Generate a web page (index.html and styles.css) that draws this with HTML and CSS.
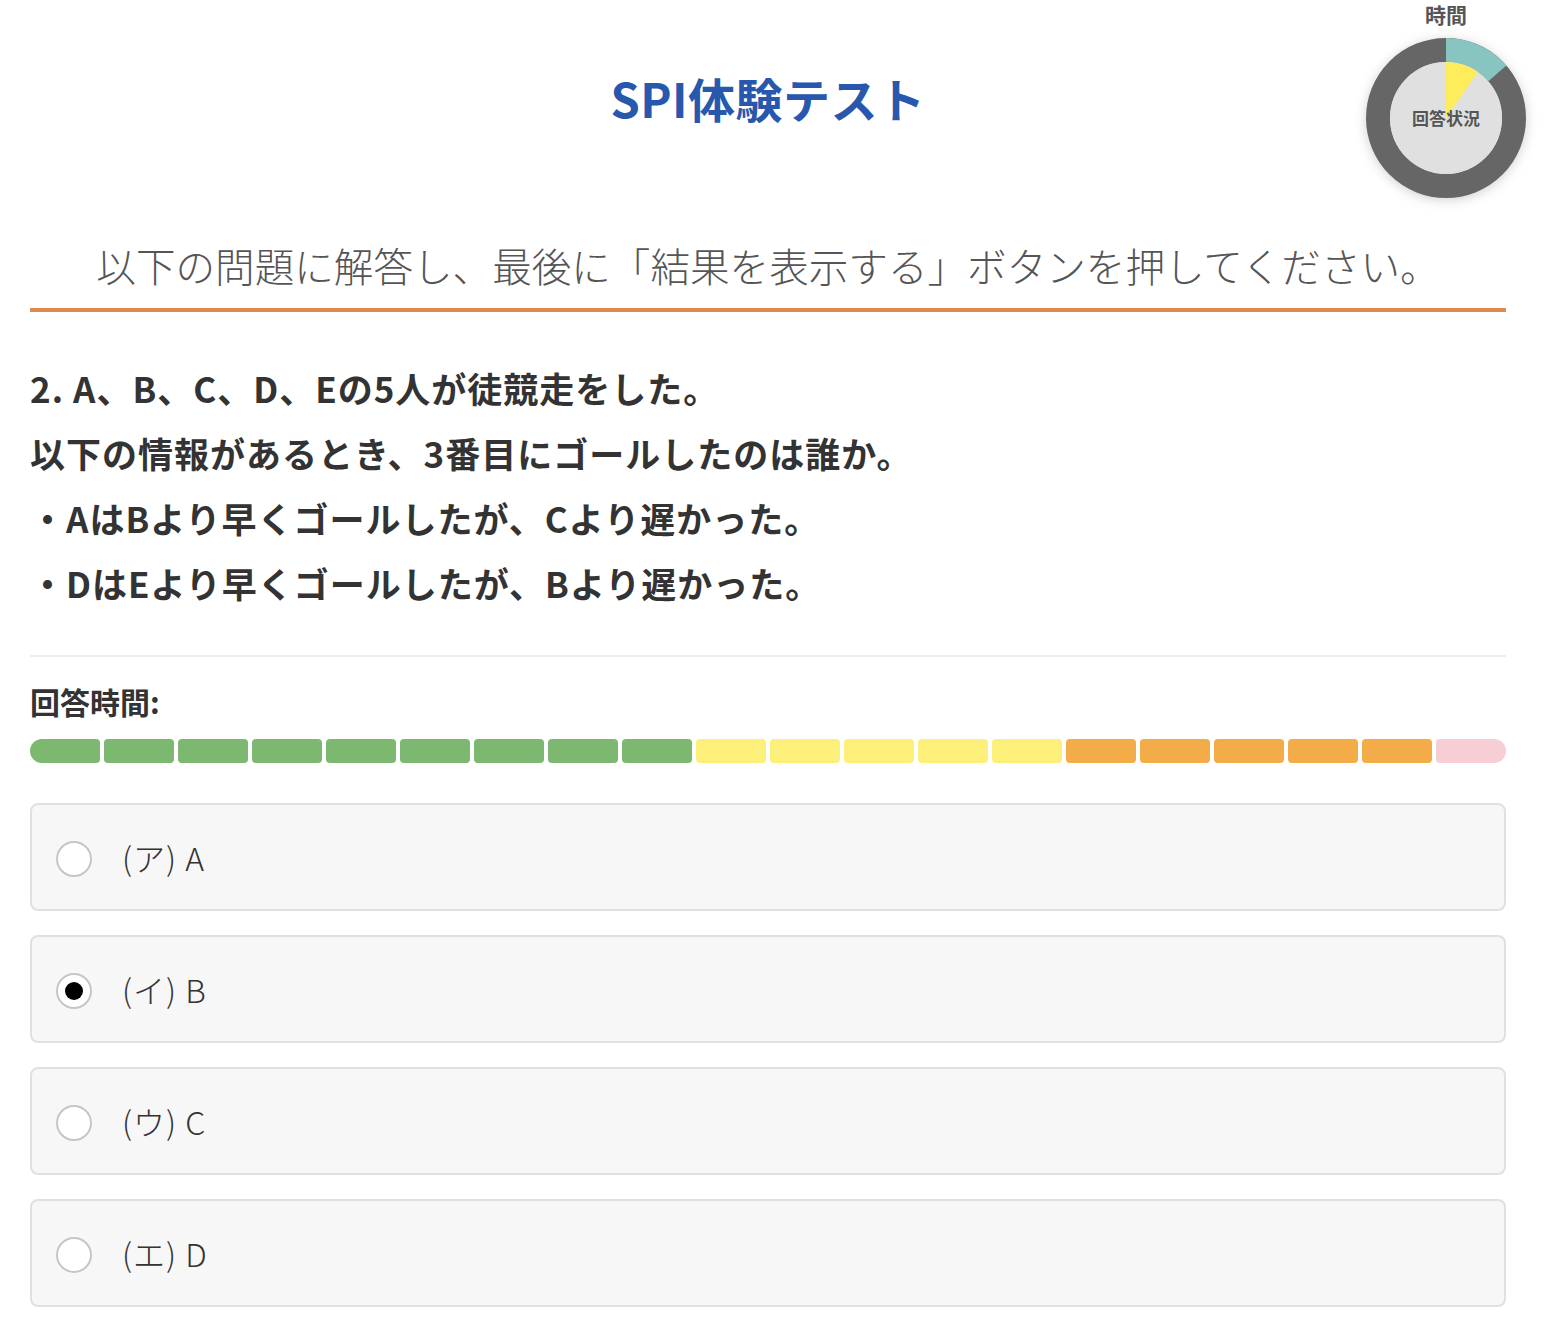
FILE: index.html
```html
<!DOCTYPE html>
<html lang="ja">
<head>
<meta charset="utf-8">
<title>SPI体験テスト</title>
<link rel="stylesheet" href="styles.css">
</head>
<body>
<div class="timer">
  <div class="timer-label">時間</div>
  <div class="donut">
    <svg width="200" height="200" viewBox="0 0 200 200">
      <circle cx="100" cy="100" r="68" fill="none" stroke="#666666" stroke-width="24"/>
      <path d="M100 20 A80 80 0 0 1 160.4 47.5 L142.3 63.3 A56 56 0 0 0 100 44 Z" fill="#88c5c0"/>
      <circle cx="100" cy="100" r="56" fill="#e0e0e0"/>
      <path d="M100 100 L100 44 A56 56 0 0 1 132.1 54.1 Z" fill="#fdec5c"/>
    </svg>
    <div class="donut-text">回答状況</div>
  </div>
</div>

<header class="header">
  <h1 class="title">SPI体験テスト</h1>
  <p class="subtitle">以下の問題に解答し、最後に「結果を表示する」ボタンを押してください。</p>
</header>

<section class="question">
  <p>2. A、B、C、D、Eの5人が徒競走をした。</p>
  <p>以下の情報があるとき、3番目にゴールしたのは誰か。</p>
  <p>・AはBより早くゴールしたが、Cより遅かった。</p>
  <p>・DはEより早くゴールしたが、Bより遅かった。</p>
</section>

<hr class="divider">

<div class="time-label">回答時間:</div>
<div class="bar">
  <span class="seg g first"></span><span class="seg g"></span><span class="seg g"></span><span class="seg g"></span><span class="seg g"></span><span class="seg g"></span><span class="seg g"></span><span class="seg g"></span><span class="seg g"></span>
  <span class="seg y"></span><span class="seg y"></span><span class="seg y"></span><span class="seg y"></span><span class="seg y"></span>
  <span class="seg o"></span><span class="seg o"></span><span class="seg o"></span><span class="seg o"></span><span class="seg o"></span>
  <span class="seg p last"></span>
</div>

<div class="options">
  <label class="option"><span class="radio"></span><span class="opt-text">(ア) A</span></label>
  <label class="option"><span class="radio checked"></span><span class="opt-text">(イ) B</span></label>
  <label class="option"><span class="radio"></span><span class="opt-text">(ウ) C</span></label>
  <label class="option"><span class="radio"></span><span class="opt-text">(エ) D</span></label>
</div>
</body>
</html>
```
FILE: styles.css
```css
html, body {
  margin: 0;
  padding: 0;
  background: #ffffff;
}
body {
  padding: 0 40px 40px 30px;
  font-family: "Noto Sans CJK JP", "Noto Sans", sans-serif;
  color: #333333;
  position: relative;
}
.timer {
  position: absolute;
  top: 0;
  right: 0;
  width: 200px;
  display: flex;
  flex-direction: column;
  align-items: center;
}
.timer-label {
  font-size: 21px;
  line-height: 28px;
  font-weight: 700;
  color: #555555;
}
.donut {
  position: relative;
  width: 200px;
  height: 200px;
  margin-top: -10px;
}
.donut svg {
  display: block;
  filter: drop-shadow(0 2px 6px rgba(0,0,0,0.18));
}
.donut-text {
  position: absolute;
  left: 0;
  right: 0;
  top: 88px;
  text-align: center;
  font-size: 17px;
  line-height: 24px;
  font-weight: 700;
  color: #555555;
}
.header {
  border-bottom: 4px solid #dd8a4a;
}
.title {
  margin: 0;
  padding-top: 68px;
  text-align: center;
  font-size: 47px;
  line-height: 60px;
  font-weight: 700;
  color: #2858ae;
  letter-spacing: 0.5px;
}
.subtitle {
  margin: 112px 0 0;
  padding-bottom: 18px;
  text-align: center;
  font-size: 39.6px;
  line-height: 50px;
  font-weight: 300;
  color: #555555;
  letter-spacing: 0;
}
.question {
  margin-top: 43px;
}
.question p {
  margin: 0;
  font-size: 35px;
  line-height: 65px;
  font-weight: 700;
  color: #333333;
  letter-spacing: 1px;
}
.divider {
  margin: 40px 0 0;
  border: 0;
  height: 2px;
  background: #eeeeee;
}
.time-label {
  margin-top: 24px;
  font-size: 30px;
  line-height: 40px;
  font-weight: 700;
  color: #333333;
}
.bar {
  margin-top: 18px;
  display: flex;
  gap: 4px;
  height: 24px;
}
.seg {
  flex: 1;
  border-radius: 4px;
}
.seg.first { border-radius: 12px 4px 4px 12px; }
.seg.last { border-radius: 4px 12px 12px 4px; }
.g { background: #7cb870; }
.y { background: #fdf07a; }
.o { background: #f3ac48; }
.p { background: #f7ced3; }
.options {
  margin-top: 40px;
  display: flex;
  flex-direction: column;
  gap: 24px;
}
.option {
  box-sizing: border-box;
  height: 108px;
  display: flex;
  align-items: center;
  gap: 30px;
  padding: 4px 24px 0;
  background: #f7f7f7;
  border: 2px solid #e0e0e0;
  border-radius: 8px;
}
.radio {
  box-sizing: border-box;
  width: 36px;
  height: 36px;
  border-radius: 50%;
  border: 2px solid #c6c6c6;
  background: #ffffff;
  display: flex;
  align-items: center;
  justify-content: center;
  flex: none;
}
.radio.checked::after {
  content: "";
  width: 18px;
  height: 18px;
  border-radius: 50%;
  background: #000000;
}
.opt-text {
  font-size: 32px;
  line-height: 40px;
  font-weight: 300;
  color: #333333;
  letter-spacing: 1px;
  margin-top: -4px;
}
```
